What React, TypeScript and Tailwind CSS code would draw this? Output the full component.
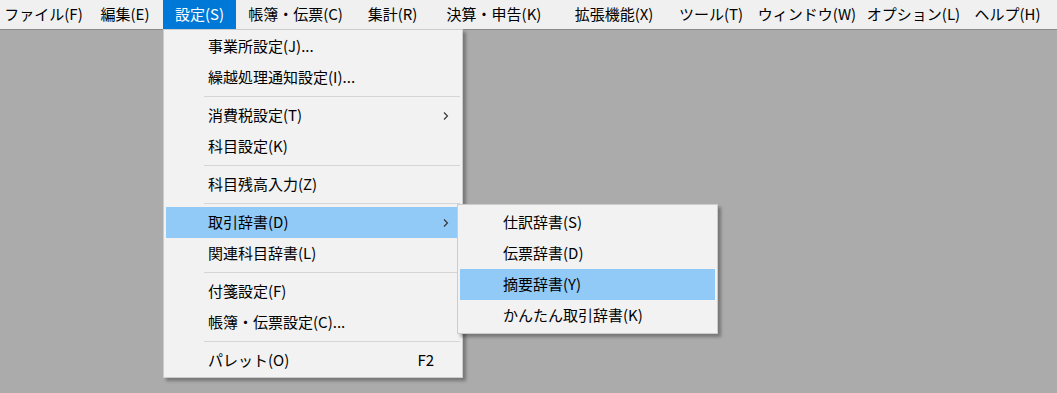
import React from 'react'

const font = { fontFamily: '"Noto Sans CJK JP", "Noto Sans", sans-serif' }

const menus = [
  { label: 'ファイル(F)', w: 'w-[87px]' },
  { label: '編集(E)', w: 'w-[76px]' },
  { label: '設定(S)', w: 'w-[73px]', active: true },
  { label: '帳簿・伝票(C)', w: 'w-[119px]' },
  { label: '集計(R)', w: 'w-[75px]' },
  { label: '決算・申告(K)', w: 'w-[128px]' },
  { label: '拡張機能(X)', w: 'w-[112px]' },
  { label: 'ツール(T)', w: 'w-[82px]' },
  { label: 'ウィンドウ(W)', w: 'w-[110px]' },
  { label: 'オプション(L)', w: 'w-[103px]' },
  { label: 'ヘルプ(H)', w: 'w-[85px]' },
]

type Entry =
  | { sep: true }
  | { label: string; sub?: boolean; hot?: boolean; key?: string; sep?: false }

const settings: Entry[] = [
  { label: '事業所設定(J)...' },
  { label: '繰越処理通知設定(I)...' },
  { sep: true },
  { label: '消費税設定(T)', sub: true },
  { label: '科目設定(K)' },
  { sep: true },
  { label: '科目残高入力(Z)' },
  { sep: true },
  { label: '取引辞書(D)', sub: true, hot: true },
  { label: '関連科目辞書(L)' },
  { sep: true },
  { label: '付箋設定(F)' },
  { label: '帳簿・伝票設定(C)...' },
  { sep: true },
  { label: 'パレット(O)', key: 'F2' },
]

const dictionaries = [
  { label: '仕訳辞書(S)' },
  { label: '伝票辞書(D)' },
  { label: '摘要辞書(Y)', hot: true },
  { label: 'かんたん取引辞書(K)' },
]

function Chevron() {
  return (
    <svg width="8" height="10" viewBox="0 0 8 10" className="text-[#333]">
      <path d="M2 1.5 L5.5 5 L2 8.5" fill="none" stroke="currentColor" strokeWidth="1.1" />
    </svg>
  )
}

function MenuRow({ entry }: { entry: Entry }) {
  if (entry.sep) {
    return (
      <div className="h-[7px] flex items-center pl-[40px] pr-[2px]">
        <div className="h-px w-full bg-[#d5d5d5]" />
      </div>
    )
  }
  return (
    <div
      className={`h-[31px] mx-[2px] flex items-center pl-[42px] pr-[10px] text-[15px] text-black ${
        entry.hot ? 'bg-[#91c9f7]' : ''
      }`}
    >
      <span className="flex-1 whitespace-nowrap">{entry.label}</span>
      {entry.key && <span className="mr-[16px]">{entry.key}</span>}
      {entry.sub && <Chevron />}
    </div>
  )
}

export default function App() {
  return (
    <div className="w-[1057px] h-[393px] bg-[#ababab] relative overflow-hidden" style={font}>
      <div className="h-[30px] bg-[#f0f0f0] border-b border-[#8a8a8a] flex">
        {menus.map((m) => (
          <div
            key={m.label}
            className={`${m.w} h-[29px] flex items-center justify-center text-[15px] whitespace-nowrap ${
              m.active ? 'bg-[#0078d7] text-white' : 'text-black'
            }`}
          >
            {m.label}
          </div>
        ))}
      </div>

      <div className="absolute left-[163px] top-[29px] w-[300px] bg-[#f2f2f2] border border-[#cccccc] shadow-[3px_3px_3px_rgba(0,0,0,0.3)] pt-[1px] pb-[1px]">
        {settings.map((e, i) => (
          <MenuRow key={i} entry={e} />
        ))}
      </div>

      <div className="absolute left-[457px] top-[204px] w-[261px] bg-[#f2f2f2] border border-[#cccccc] shadow-[3px_3px_3px_rgba(0,0,0,0.3)] pt-[2px] pb-[2px]">
        {dictionaries.map((d) => (
          <div
            key={d.label}
            className={`h-[31px] mx-[2px] flex items-center pl-[43px] text-[15px] text-black whitespace-nowrap ${
              d.hot ? 'bg-[#91c9f7]' : ''
            }`}
          >
            {d.label}
          </div>
        ))}
      </div>
    </div>
  )
}
